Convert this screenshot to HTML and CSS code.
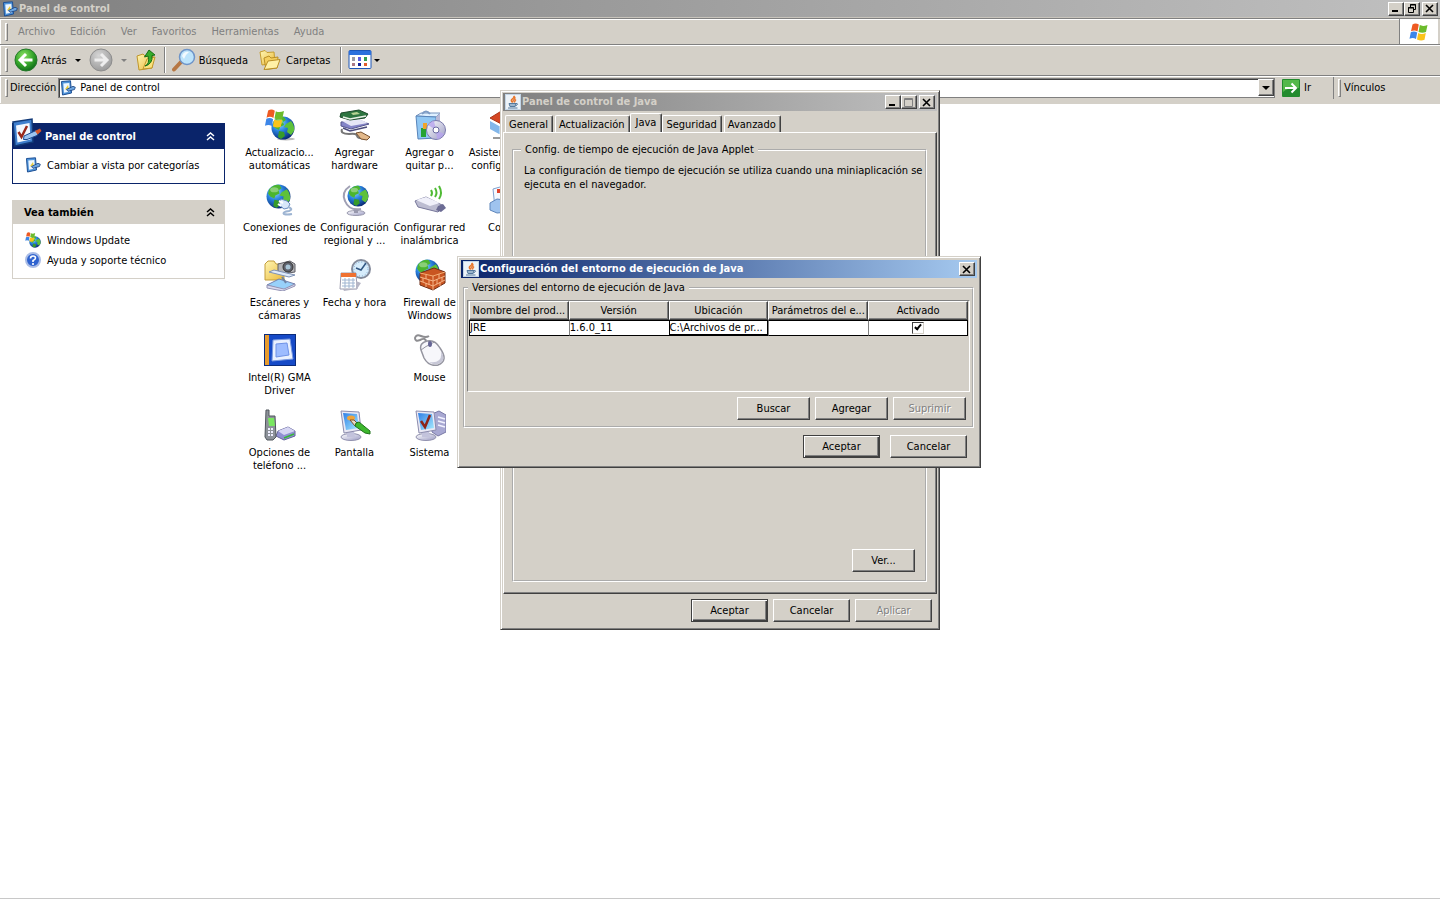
FILE: index.html
```html
<!DOCTYPE html>
<html lang="es">
<head>
    <meta charset="UTF-8">
    <meta name="viewport" content="width=device-width, initial-scale=1.0">
    <title>Panel de control</title>
    <link rel="stylesheet" href="styles.css">
</head>
<body>
    <!-- shared icons -->
    <svg class="sprite" aria-hidden="true">
        <defs>
            <radialGradient id="sea" cx="35%" cy="30%" r="75%">
                <stop offset="0" stop-color="#9be0ff"/>
                <stop offset=".45" stop-color="#2a83e0"/>
                <stop offset="1" stop-color="#08256f"/>
            </radialGradient>
            <radialGradient id="green" cx="40%" cy="30%" r="70%">
                <stop offset="0" stop-color="#8be063"/>
                <stop offset=".6" stop-color="#35a52a"/>
                <stop offset="1" stop-color="#12701a"/>
            </radialGradient>
            <radialGradient id="grey" cx="40%" cy="30%" r="70%">
                <stop offset="0" stop-color="#d6d6d6"/>
                <stop offset="1" stop-color="#9b9b9b"/>
            </radialGradient>
            <linearGradient id="yellow" x1="0" y1="0" x2="1" y2="1">
                <stop offset="0" stop-color="#fff6b4"/>
                <stop offset="1" stop-color="#eab93a"/>
            </linearGradient>
            <linearGradient id="screen" x1="0" y1="0" x2="1" y2="1">
                <stop offset="0" stop-color="#2f7fe6"/>
                <stop offset="1" stop-color="#a8ecff"/>
            </linearGradient>
            <linearGradient id="silver" x1="0" y1="0" x2="1" y2="1">
                <stop offset="0" stop-color="#ffffff"/>
                <stop offset="1" stop-color="#9c9cc4"/>
            </linearGradient>
        </defs>
        <symbol id="flag" viewBox="0 0 20 18">
            <path d="M3.500 1.500Q6.500 -.5 9.800 1.600L8.500 8.500Q5.500 6.500 2 8.300Z" fill="#ee5a22"/>
            <path d="M10.800 2.100Q14 3.800 18.500 1.900L17 9Q13.500 10.600 9.500 9Z" fill="#6cbb2c"/>
            <path d="M1.800 9.300Q5.200 7.700 8.200 9.600L7 16Q4 14.200 .5 15.800Z" fill="#3d86e8"/>
            <path d="M9.200 10Q12.500 11.800 16.800 10L15.500 16.800Q12 18.300 8 16.500Z" fill="#fbc31a"/>
        </symbol>
        <symbol id="globe" viewBox="0 0 24 24">
            <circle cx="12" cy="12" r="11.500" fill="url(#sea)"/>
            <path d="M3 5Q8 0 13 1L15 4L12 6L13 9L9 11L8 14L4 12L2 9Z" fill="#4cb52f"/>
            <path d="M15 8L20 5Q24 10 23 15L20 19L16 16L17 12L13 11Z" fill="#5ec13a"/>
            <path d="M8 15L13 16L14 20L10 23L7 21Z" fill="#379b2a"/>
            <ellipse cx="8" cy="5.500" rx="4" ry="2.500" fill="#fff" opacity=".35"/>
        </symbol>
        <symbol id="cpanel" viewBox="0 0 32 32">
            <path d="M3 5L22 2L23 25L5 29Z" fill="#3f7fce" stroke="#123a78" stroke-width="1.500"/>
            <path d="M6 8.500L19.500 6L20.500 22.500L7.500 25.500Z" fill="#f3f8ff"/>
            <path d="M8.500 15L11.500 20L17 9" fill="none" stroke="#99291b" stroke-width="2.500"/>
            <path d="M14 19L26 13.500L29 15.500L27 18.500L17 22.500L13.500 22.500Z" fill="#9cc4f0" stroke="#1d4a92"/>
            <path d="M25 14L30 11.500L31.500 14L27.500 17.500Z" fill="#d5562c"/>
        </symbol>
        <symbol id="cpanel-small" viewBox="0 0 16 16">
            <path d="M1.500 1.500L10.500 .8L11.500 13L2.500 15Z" fill="#4f95dc" stroke="#1d4f94"/>
            <path d="M3.300 3.500L9.300 3L10 11.600L4 12.800Z" fill="#eef7ff"/>
            <path d="M4.800 9.500L8 5L8.800 8.500Z" fill="#e8cb3c"/>
            <path d="M6.500 9.500L13 6.300L15.300 7.300L14.500 9.500L8 11.300Z" fill="#6ea6e0" stroke="#173f7d" stroke-width=".8"/>
        </symbol>
        <symbol id="java" viewBox="0 0 16 16">
            <rect width="16" height="16" fill="#c3d5e6"/>
            <rect x="1" y="1" width="14" height="14" fill="#edf3f8"/>
            <path d="M7.500 8.500Q5 6.500 7.500 4.800Q9.500 3.500 8.800 2Q11 4 9 5.500Q7.500 6.500 8 8.500M10 8.500Q9 7.500 11 5.500" fill="none" stroke="#e8762c" stroke-width="1.400"/>
            <path d="M4 9.500H11L10 12.500H5Z" fill="#9db6cd" stroke="#55799c"/>
            <path d="M3 14H12.500" stroke="#55799c"/>
            <path d="M11 9.500Q14.500 9.500 10.500 12" fill="none" stroke="#55799c"/>
        </symbol>
        <symbol id="chevrons" viewBox="0 0 9 9">
            <path d="M1 4L4.500 1L8 4M1 8L4.500 5L8 8" fill="none" stroke="currentColor" stroke-width="1.500"/>
        </symbol>
        <symbol id="monitor" viewBox="0 0 32 32">
            <ellipse cx="12" cy="28" rx="10" ry="3.500" fill="url(#silver)" stroke="#9191ae"/>
            <path d="M8 22L15 22L16 28L8 28Z" fill="#c3c3dc"/>
            <path d="M2 2L20 3L22 21L5 24Z" fill="#e9e9f5" stroke="#8c8cad"/>
            <path d="M4 4L18 5L20 19L7 21Z" fill="url(#screen)"/>
        </symbol>
    </svg>

    <div class="explorer">
        <header class="title-bar main-title">
            <svg class="icon16"><use href="#cpanel-small"/></svg>
            <h1>Panel de control</h1>
            <div class="controls">
                <button class="ctl" aria-label="Minimizar"><svg viewBox="0 0 10 9"><path d="M1 7H7" stroke="#000" stroke-width="2"/></svg></button>
                <button class="ctl" aria-label="Restaurar"><svg viewBox="0 0 10 9"><path d="M3.500 3V.5H8.500V5.500H6.500M3 1H9M1.500 3.500H6.500V8.500H1.500ZM1 4H7" fill="none" stroke="#000"/></svg></button>
                <button class="ctl last" aria-label="Cerrar"><svg viewBox="0 0 10 9"><path d="M1 1L8 8M8 1L1 8" stroke="#000" stroke-width="1.600"/></svg></button>
            </div>
        </header>

        <div class="menu-row">
            <nav class="menu">
                <i class="grip"></i>
                <a href="#">Archivo</a>
                <a href="#">Edición</a>
                <a href="#">Ver</a>
                <a href="#">Favoritos</a>
                <a href="#">Herramientas</a>
                <a href="#">Ayuda</a>
            </nav>
            <div class="brand"><svg><use href="#flag"/></svg></div>
        </div>

        <div class="toolbar">
            <i class="grip"></i>
            <button class="tool back">
                <svg class="round" viewBox="0 0 24 24"><circle cx="12" cy="12" r="11" fill="url(#green)" stroke="#24792a"/><path d="M18.500 12H7M12 6L6 12L12 18" fill="none" stroke="#fff" stroke-width="3"/></svg>
                Atrás
            </button>
            <button class="arrow" aria-label="Historial atrás"></button>
            <button class="tool" aria-label="Adelante" disabled>
                <svg class="round" viewBox="0 0 24 24"><circle cx="12" cy="12" r="11" fill="url(#grey)" stroke="#8d8d8d"/><path d="M5.500 12H17M12 6L18 12L12 18" fill="none" stroke="#eee" stroke-width="3"/></svg>
            </button>
            <button class="arrow off" aria-label="Historial adelante" disabled></button>
            <button class="tool" aria-label="Arriba">
                <svg class="tool-icon" viewBox="0 0 22 22"><path d="M2 7L8 5L10 7L18 7L17 19L4 21Z" fill="url(#yellow)" stroke="#bf962c"/><path d="M8 20L12 10L20 8L17 19Z" fill="#fbe27c" stroke="#bf962c"/><path d="M10 17Q15 15 13 7L9.500 8L14 1L20 6L17 6.500Q18 15 10 17Z" fill="#37ad2c" stroke="#176d16"/></svg>
            </button>
            <i class="sep"></i>
            <button class="tool search">
                <svg class="round" viewBox="0 0 24 24"><path d="M9 14L2 21.500" stroke="#b77743" stroke-width="4" stroke-linecap="round"/><circle cx="15" cy="9" r="7.500" fill="#bde4fb" stroke="#6e94c8" stroke-width="1.500"/><path d="M10 8Q12 3 17 4Q14 6 12 11Z" fill="#fff" opacity=".8"/></svg>
                Búsqueda
            </button>
            <button class="tool folders">
                <svg class="tool-icon" viewBox="0 0 22 22"><path d="M1 3L6 1.500L8 3.500L15 3L16 14L3 16Z" fill="url(#yellow)" stroke="#c59d30"/><path d="M5 9L10 7L12 9L19 8L18 19L7 20.500Z" fill="#f4cf5f" stroke="#b98e25"/><path d="M5 20.500L9 12L21 10.500L18 19Z" fill="#fff1a6" stroke="#b98e25"/></svg>
                Carpetas
            </button>
            <i class="sep"></i>
            <button class="tool views" aria-label="Vistas">
                <svg class="round" viewBox="0 0 24 24"><rect x="1" y="2.500" width="22" height="18" rx="1" fill="#fff" stroke="#1c56b8"/><path d="M1 5H23" stroke="#2b70dd" stroke-width="4"/><path d="M4 9H7V13H4Z" fill="#9a9aa4"/><path d="M10 9H13V13H10Z" fill="#5d5de0"/><path d="M16 9H19V13H16Z" fill="#349d50"/><path d="M4 15H7V18H4Z" fill="#a87986"/><path d="M10 15H13V18H10Z" fill="#12249a"/><path d="M16 15H19V18H16Z" fill="#e05d2c"/></svg>
            </button>
            <button class="arrow" aria-label="Elegir vista"></button>
        </div>

        <div class="address-row">
            <i class="grip"></i>
            <label for="address">Dirección</label>
            <div class="address">
                <svg class="icon16"><use href="#cpanel-small"/></svg>
                <input type="text" id="address" value="Panel de control">
                <button class="drop" aria-label="Mostrar direcciones"></button>
            </div>
            <button class="go">
                <svg viewBox="0 0 18 18"><rect width="18" height="18" rx="1" fill="#238b2e"/><path d="M1 1H17V9Q8 7 1 13Z" fill="#54b94b"/><path d="M3 9H14M9.500 4.500L14 9L9.500 13.500" fill="none" stroke="#fff" stroke-width="2"/></svg>
                Ir
            </button>
            <div class="links"><i class="grip"></i>Vínculos</div>
        </div>

        <main class="content">
            <aside class="side">
                <section class="box primary">
                    <h2><svg class="big-icon"><use href="#cpanel"/></svg>Panel de control<svg class="chev"><use href="#chevrons"/></svg></h2>
                    <ul>
                        <li><svg class="icon16"><use href="#cpanel-small"/></svg><a href="#">Cambiar a vista por categorías</a></li>
                    </ul>
                </section>
                <section class="box">
                    <h2>Vea también<svg class="chev"><use href="#chevrons"/></svg></h2>
                    <ul>
                        <li><svg class="icon16" viewBox="0 0 16 16"><use href="#globe" x="4" y="4" width="12" height="12"/><use href="#flag" x="0" y="0" width="11" height="10"/></svg><a href="#">Windows Update</a></li>
                        <li><svg class="icon16" viewBox="0 0 16 16"><circle cx="8" cy="8" r="7" fill="#2f63cf" stroke="#a9bce6" stroke-width="2"/><path d="M5.500 6.500Q5.500 4 8 4Q10.500 4 10.500 6Q10.500 7.500 8 8.500V10M8 11V13" fill="none" stroke="#fff" stroke-width="1.600"/></svg><a href="#">Ayuda y soporte técnico</a></li>
                    </ul>
                </section>
            </aside>

            <div class="icons">
                <a href="#" class="item">
                    <svg viewBox="0 0 32 32"><ellipse cx="22" cy="30" rx="9" ry="1.500" fill="#bbb"/><use href="#globe" x="7" y="7" width="24" height="24"/><use href="#flag" x="0" y="0" width="22" height="19"/></svg>
                    Actualizacio... automáticas
                </a>
                <a href="#" class="item">
                    <svg viewBox="0 0 32 32"><path d="M3 20Q1 25 10 25Q18 24 18 27Q19 30 25 29" fill="none" stroke="#777" stroke-width="2"/><path d="M2 13L20 11L30 15L12 20L2 17Z" fill="#8585c8" stroke="#55558c"/><path d="M3 12L20 10L29 14L12 17Z" fill="#e6e6f6"/><path d="M2 4L20 1L29 5L26 9L11 11L1 8Z" fill="#2d7540" stroke="#1c4a2a"/><path d="M4 8L11 10L27 7" fill="none" stroke="#e9f2e7" stroke-width="1.500"/><path d="M12 4L18 3L21 5L14 6Z" fill="#b5d392"/><path d="M4 19L11 22L28 18" fill="none" stroke="#4b4b7a" stroke-width="1.500"/><path d="M17 24L22 23L31 28L28 31L22 30Z" fill="#e3b98b" stroke="#77502d"/></svg>
                    Agregar hardware
                </a>
                <a href="#" class="item">
                    <svg viewBox="0 0 32 32"><path d="M2 7L7 4L26 4L22 8Z" fill="#dff0ff" stroke="#7693bd"/><path d="M2 7L22 8L22 29L4 30Z" fill="#91c7f3" stroke="#5884ba"/><path d="M22 8L26 4L26 26L22 29Z" fill="#b9b9d6"/><path d="M8 5Q12 0 16 5" fill="none" stroke="#7d9bc4" stroke-width="2"/><path d="M7 19H12V28H7Z" fill="#25a333"/><path d="M9 14H13V20H9Z" fill="#f0a428"/><circle cx="22" cy="21" r="9.500" fill="url(#silver)" stroke="#7a7aac"/><path d="M22 21L14 16Q17 12 20 12ZM22 21L30 25Q27 30 23 30Z" fill="#b6a4ee" opacity=".8"/><circle cx="22" cy="21" r="3" fill="#fff" stroke="#6969a0"/></svg>
                    Agregar o quitar p...
                </a>
                <a href="#" class="item">
                    <svg viewBox="0 0 32 32"><path d="M1 12L10 17L10 25L1 20Z" fill="#83b7ea"/><path d="M1 9L14 1L31 8L18 18Z" fill="#d54623" stroke="#a93518"/><path d="M10 17L20 18L20 27L10 25Z" fill="#b4d4f2"/><path d="M4 29H28" stroke="#999" stroke-width="2"/></svg>
                    Asistente para configurar r...
                </a>

                <a href="#" class="item">
                    <svg viewBox="0 0 32 32"><use href="#globe" x="2" y="0" width="25" height="25"/><path d="M17 15L23 17L26 20L24 24L20 25L15 21Z" fill="#d8e7fa" stroke="#6a8cc0"/><path d="M15 17L19 19M14 20L17 22" stroke="#fff" stroke-width="2"/><path d="M24 23Q30 25 25 27Q18 28 20 30Q23 31 28 30" fill="none" stroke="#9db4d2" stroke-width="2"/></svg>
                    Conexiones de red
                </a>
                <a href="#" class="item">
                    <svg viewBox="0 0 32 32"><ellipse cx="17" cy="29" rx="9" ry="2.500" fill="url(#silver)" stroke="#9898ad"/><path d="M17 25V29" stroke="#9898ad" stroke-width="4"/><path d="M11 2Q2 8 6 17Q10 27 22 25" fill="none" stroke="#a0a0b4" stroke-width="2"/><use href="#globe" x="8" y="1" width="22" height="22"/></svg>
                    Configuración regional y ...
                </a>
                <a href="#" class="item">
                    <svg viewBox="0 0 32 32"><path d="M1 17L12 13L30 22L24 28L4 23Z" fill="#bcbcd1" stroke="#77779a"/><path d="M2 16L12 13L26 19L16 22Z" fill="#f0f0fa"/><path d="M24 22L29 20L32 24L27 28L22 26Z" fill="#6c6c94"/><path d="M17 6Q19 9 17 12M21 4Q24 9 21 13M25 2Q29 9 25 15" fill="none" stroke="#4fba34" stroke-width="2"/></svg>
                    Configurar red inalámbrica
                </a>
                <a href="#" class="item">
                    <svg viewBox="0 0 32 32"><path d="M4 5L18 1L27 5L27 24L6 24Z" fill="#f5f9ff" stroke="#7fa1cf"/><path d="M1 19L8 15L30 18L30 27L8 29L1 26Z" fill="#9fc3ee" stroke="#5e86bb"/><rect x="8" y="5" width="4" height="4" fill="#e0432c"/><path d="M15 10H23M15 14H22" stroke="#9cb6d5"/></svg>
                    Correo
                </a>

                <a href="#" class="item">
                    <svg viewBox="0 0 32 32"><path d="M1 5L4 2L10 2L12 5L20 5L20 21L1 21Z" fill="url(#yellow)" stroke="#c39c3b"/><path d="M14 5L26 2L31 5L31 13L18 15L14 12Z" fill="#b4b4b8" stroke="#5f5f67"/><circle cx="24" cy="8" r="5" fill="#60636e" stroke="#333"/><circle cx="24" cy="8" r="2.500" fill="#a9c6d8"/><path d="M5 13L25 18L31 16L10 11Z" fill="#dfeaf9" stroke="#7f92b4"/><path d="M3 26L15 20L31 25L20 31Z" fill="#98d1fa" stroke="#7381af"/><path d="M3 26V29L19 32L31 27V25L20 30Z" fill="#d9d9ee" stroke="#9494b5"/><path d="M18 18L22 24" stroke="#6e84a5" stroke-width="2"/></svg>
                    Escáneres y cámaras
                </a>
                <a href="#" class="item">
                    <svg viewBox="0 0 32 32"><circle cx="22" cy="10" r="9" fill="#d6ecfb" stroke="#848b9b" stroke-width="2"/><circle cx="22" cy="10" r="7" fill="none" stroke="#7fa8cd" stroke-dasharray="1 2"/><path d="M27 4L22 11L17 9" fill="none" stroke="#315682" stroke-width="1.500"/><path d="M2 14L17 14L18 30L1 30Z" fill="#fff" stroke="#9c9caf"/><path d="M2 14L17 14V18H2Z" fill="#ef7131"/><path d="M3 21H16M3 24H16M3 27H16M6 19V29M10 19V29M14 19V29" stroke="#a0b5d1"/><path d="M17 22L22 24L18 30L5 32L4 30H17Z" fill="#b6b6c5"/></svg>
                    Fecha y hora
                </a>
                <a href="#" class="item">
                    <svg viewBox="0 0 32 32"><use href="#globe" x="1" y="0" width="25" height="25"/><path d="M6 14L20 9L31 13L31 24L19 31L6 26Z" fill="#c95521" stroke="#702e16"/><path d="M6 14L19 17L31 13" fill="none" stroke="#f4ad72"/><path d="M6 18L19 22L31 17M6 22L19 27L31 21M19 17V31M12 15.500V20M9 19V23M15 21V26M12 24V28M25 15V19M28 18V22M23 20V25M26 23V27" fill="none" stroke="#f5b487"/></svg>
                    Firewall de Windows
                </a>
                <span></span>

                <a href="#" class="item">
                    <svg viewBox="0 0 32 32"><rect x=".5" y=".5" width="31" height="31" fill="#164ac7" stroke="#0b2c7c"/><rect x="1" y="1" width="4" height="30" fill="#e79b2d"/><path d="M9 6L26 5L29 25L8 27Z" fill="#eaf1ff" stroke="#7898df"/><path d="M12 10L23 9L25 21L12 23Z" fill="#9dbcff" stroke="#6f92e6"/></svg>
                    Intel(R) GMA Driver
                </a>
                <span></span>
                <a href="#" class="item">
                    <svg viewBox="0 0 32 32"><path d="M12 8Q12 3 6 6Q1 8 1 4Q2 0 7 2Q12 4 15 2" fill="none" stroke="#8d8d91" stroke-width="2"/><path d="M7 16Q5 9 13 7Q21 5 26 14Q35 27 24 31Q15 33 10 24Z" fill="#f7f7fb" stroke="#94949f" stroke-width="1.500"/><path d="M7 16Q12 12 17 10Q21 7 22 9M14 7L17 11" fill="none" stroke="#94949f"/><ellipse cx="16" cy="10" rx="2" ry="3" fill="#666695"/><path d="M27 17Q33 27 24 30Q19 31 15 28Q29 30 27 17Z" fill="#c7c7d6"/></svg>
                    Mouse
                </a>
                <span></span>

                <a href="#" class="item">
                    <svg viewBox="0 0 32 32"><path d="M14 22L24 18L31 22L31 27L20 31L12 27Z" fill="#9191d2" stroke="#65659b"/><path d="M14 22L24 18L31 22L20 26Z" fill="#d6d6f3"/><path d="M20 29L30 25" stroke="#35b935" stroke-width="1.500"/><path d="M2 1L5 1L5 7L11 7L12 28L9 31L3 31L1 28Z" fill="#8d9299" stroke="#50565d"/><path d="M4 9H10L11 17L5 17Z" fill="#79e75f"/><path d="M4 20H10M4 23H10M4 26H10" stroke="#eef" stroke-dasharray="2 1" stroke-width="2"/></svg>
                    Opciones de teléfono ...
                </a>
                <a href="#" class="item">
                    <svg viewBox="0 0 32 32"><use href="#monitor" width="32" height="32"/><ellipse cx="12" cy="9" rx="4" ry="2.500" fill="#f0a43a"/><path d="M11 11L15 11L19 15L16 17Z" fill="#e9dcc8" stroke="#835227"/><path d="M17 14L20 13L31 22L31 25L26 24L16 17Z" fill="#3db72d" stroke="#20741c"/></svg>
                    Pantalla
                </a>
                <a href="#" class="item">
                    <svg viewBox="0 0 32 32"><path d="M18 5L25 2L32 6L32 23L24 27L18 23Z" fill="#a8a8d2" stroke="#7878a5"/><path d="M24 8L31 10M24 12L31 14M24 16L31 18" stroke="#f2f2ff" stroke-width="1.500"/><use href="#monitor" width="32" height="32"/><path d="M7 12L11 18L16 6" fill="none" stroke="#8e2418" stroke-width="2.500"/></svg>
                    Sistema
                </a>
            </div>
        </main>
    </div>

    <section class="window java-window">
        <header class="title-bar">
            <svg class="icon16"><use href="#java"/></svg>
            <h1>Panel de control de Java</h1>
            <div class="controls">
                <button class="ctl" aria-label="Minimizar"><svg viewBox="0 0 10 9"><path d="M1 7H7" stroke="#000" stroke-width="2"/></svg></button>
                <button class="ctl" aria-label="Maximizar" disabled><svg viewBox="0 0 10 9"><path d="M.5 .5H8.500V8.500H.5ZM0 1.500H9" fill="none" stroke="#808080"/></svg></button>
                <button class="ctl last" aria-label="Cerrar"><svg viewBox="0 0 10 9"><path d="M1 1L8 8M8 1L1 8" stroke="#000" stroke-width="1.600"/></svg></button>
            </div>
        </header>
        <div class="tabs">
            <button>General</button>
            <button>Actualización</button>
            <button class="active">Java</button>
            <button>Seguridad</button>
            <button>Avanzado</button>
        </div>
        <div class="tab-page">
            <fieldset>
                <legend>Config. de tiempo de ejecución de Java Applet</legend>
                <p>La configuración de tiempo de ejecución se utiliza cuando una miniaplicación se<br>ejecuta en el navegador.</p>
                <button class="btn view">Ver...</button>
            </fieldset>
        </div>
        <div class="actions">
            <button class="btn default">Aceptar</button>
            <button class="btn">Cancelar</button>
            <button class="btn" disabled>Aplicar</button>
        </div>
    </section>

    <section class="window runtime-window">
        <header class="title-bar active">
            <svg class="icon16"><use href="#java"/></svg>
            <h1>Configuración del entorno de ejecución de Java</h1>
            <div class="controls">
                <button class="ctl last" aria-label="Cerrar"><svg viewBox="0 0 10 9"><path d="M1 1L8 8M8 1L1 8" stroke="#000" stroke-width="1.600"/></svg></button>
            </div>
        </header>
        <fieldset>
            <legend>Versiones del entorno de ejecución de Java</legend>
            <div class="table-box">
                <table>
                    <thead>
                        <tr>
                            <th>Nombre del prod...</th>
                            <th>Versión</th>
                            <th>Ubicación</th>
                            <th>Parámetros del e...</th>
                            <th>Activado</th>
                        </tr>
                    </thead>
                    <tbody>
                        <tr>
                            <td>JRE</td>
                            <td>1.6.0_11</td>
                            <td class="focus">C:\Archivos de pr...</td>
                            <td></td>
                            <td class="check"><input type="checkbox" aria-label="Activado" checked></td>
                        </tr>
                    </tbody>
                </table>
            </div>
            <div class="row-actions">
                <button class="btn">Buscar</button>
                <button class="btn">Agregar</button>
                <button class="btn" disabled>Suprimir</button>
            </div>
        </fieldset>
        <div class="actions">
            <button class="btn default">Aceptar</button>
            <button class="btn">Cancelar</button>
        </div>
    </section>
</body>
</html>
```
FILE: styles.css
```css
* {
    margin: 0;
    padding: 0;
    box-sizing: border-box;
}
body, button, input {
    font-family: Tahoma, "DejaVu Sans Condensed", "DejaVu Sans", sans-serif;
    font-size: 11px;
    line-height: 13px;
    color: #000;
}
body {
    position: relative;
    background: #fff;
}
a {
    color: inherit;
    text-decoration: none;
}
button {
    background: none;
    border: none;
}
svg {
    display: block;
    flex: none;
}
.sprite {
    position: absolute;
    width: 0;
    height: 0;
}
.icon16 {
    width: 16px;
    height: 16px;
}

/* explorer window */
.explorer {
    display: flex;
    flex-direction: column;
    min-height: 100vh;
}
.title-bar {
    display: flex;
    align-items: center;
    gap: 1px;
    height: 18px;
    padding-left: 2px;
    background: linear-gradient(to right, #808080, #c0c0c0);
    color: #d4d0c8;
}
.title-bar.active {
    background: linear-gradient(to right, #0a246a, #a6caf0);
    color: #fff;
}
.title-bar h1 {
    flex: 1;
    font-size: 11px;
    line-height: 18px;
    white-space: nowrap;
}
.controls {
    display: flex;
    padding-right: 2px;
}
.ctl {
    width: 16px;
    height: 14px;
    padding: 1px 2px;
    background: #d4d0c8;
    border: 1px solid;
    border-color: #fff #404040 #404040 #fff;
    box-shadow: inset -1px -1px #808080;
}
.ctl svg {
    width: 10px;
    height: 9px;
}
.ctl.last {
    margin-left: 2px;
}
.main-title {
    border-bottom: 1px solid #c8c4bc;
}
.menu-row, .toolbar, .address-row {
    display: flex;
    align-items: center;
    background: #d4d0c8;
    border-top: 1px solid #808080;
    box-shadow: inset 0 1px #fff, inset 1px 0 #fff;
}
.menu-row {
    height: 26px;
    align-items: stretch;
}
.menu {
    flex: 1;
    display: flex;
    align-items: center;
    gap: 15px;
    padding-left: 5px;
    color: #808080;
    border-right: 1px solid #808080;
}
.menu .grip {
    margin-right: -5px;
}
.brand {
    width: 40px;
    display: flex;
    align-items: center;
    justify-content: center;
    background: #fff;
    border-right: 2px solid #d4d0c8;
}
.brand svg {
    width: 20px;
    height: 18px;
}
.grip {
    width: 3px;
    height: 18px;
    background: #d4d0c8;
    border: 1px solid;
    border-color: #fff #808080 #808080 #fff;
}
.toolbar {
    height: 31px;
    padding-left: 5px;
}
.toolbar .grip {
    margin-right: 6px;
    height: 24px;
}
.tool {
    display: flex;
    align-items: center;
    gap: 3px;
}
.round {
    width: 24px;
    height: 24px;
}
.tool-icon {
    width: 22px;
    height: 22px;
}
.tool.folders {
    gap: 5px;
    margin-left: 11px;
}
.arrow {
    width: 22px;
    height: 22px;
    display: flex;
    align-items: center;
    justify-content: center;
}
.arrow::after, .drop::after {
    content: "";
    border: 3px solid transparent;
    border-top-color: #000;
    border-bottom: none;
}
.arrow.off::after {
    border-top-color: #808080;
}
.sep {
    width: 2px;
    height: 26px;
    margin: 0 6px 0 7px;
    background: #808080;
    border-right: 1px solid #fff;
}
.sep + .views {
    margin-right: -6px;
}
.folders + .sep {
    margin-left: 10px;
}
.address-row {
    height: 29px;
    padding: 1px 0 5px 5px;
    border-bottom: 1px solid #d4d0c8;
    gap: 2px;
}
.address {
    flex: 1;
    display: flex;
    align-items: center;
    height: 20px;
    padding-left: 1px;
    background: #fff;
    border: 1px solid #808080;
    box-shadow: inset 1px 1px #404040;
}
.address input {
    flex: 1;
    height: 16px;
    padding-left: 4px;
    border: none;
    outline: none;
}
.drop {
    width: 16px;
    height: 17px;
    display: flex;
    align-items: center;
    justify-content: center;
    background: #d4d0c8;
    border: 1px solid;
    border-color: #fff #404040 #404040 #fff;
    box-shadow: inset -1px -1px #808080;
}
.drop::after {
    border-width: 4px;
    border-bottom: none;
}
.go {
    width: 57px;
    display: flex;
    align-items: center;
    gap: 4px;
    padding-left: 5px;
    border-right: 1px solid #808080;
    height: 22px;
}
.go svg {
    width: 18px;
    height: 18px;
}
.links {
    width: 104px;
    display: flex;
    align-items: center;
    gap: 3px;
    padding-left: 2px;
}
.content {
    flex: 1;
    display: flex;
    gap: 17px;
    padding: 5px 0 0 12px;
    margin-bottom: 1px;
    border-bottom: 1px solid #c8c8c8;
}

/* side panels */
.side {
    width: 213px;
    padding-top: 14px;
    display: flex;
    flex-direction: column;
    gap: 16px;
}
.box {
    border: 1px solid #d4d0c8;
}
.box h2 {
    display: flex;
    align-items: center;
    height: 23px;
    padding: 0 9px 0 11px;
    background: #d4d0c8;
    font-size: 11px;
}
.chev {
    width: 9px;
    height: 9px;
    margin-left: auto;
}
.box ul {
    list-style: none;
    padding: 6px 12px 8px;
}
.box li {
    display: flex;
    align-items: center;
    gap: 6px;
    height: 20px;
}
.box.primary {
    border-color: #0a246a;
}
.primary h2 {
    height: 25px;
    padding-left: 0;
    gap: 3px;
    background: #0a246a;
    color: #fff;
}
.big-icon {
    width: 32px;
    height: 32px;
    margin: -8px 0 0 -3px;
}

/* icon grid */
.icons {
    display: grid;
    grid-template-columns: repeat(4, 75px);
    grid-auto-rows: 75px;
}
.item {
    display: flex;
    flex-direction: column;
    align-items: center;
    gap: 5px;
    text-align: center;
}
.item svg {
    width: 32px;
    height: 32px;
}

/* floating windows */
.window {
    position: absolute;
    display: flex;
    flex-direction: column;
    background: #d4d0c8;
    border: 1px solid;
    border-color: #d4d0c8 #404040 #404040 #d4d0c8;
    box-shadow: inset 1px 1px #fff, inset -1px -1px #808080;
    padding: 2px;
}
.java-window {
    left: 500px;
    top: 90px;
    width: 440px;
    height: 540px;
}
.runtime-window {
    left: 457px;
    top: 256px;
    width: 524px;
    height: 212px;
    padding: 3px;
}
.tabs {
    display: flex;
    align-items: flex-end;
    gap: 2px;
    height: 21px;
    padding-left: 2px;
}
.tabs button {
    height: 17px;
    padding: 0 4px 0 3px;
    border: 1px solid;
    border-color: #fff #404040 transparent #fff;
    border-bottom: none;
    border-radius: 2px 2px 0 0;
    box-shadow: inset -1px 0 #808080;
}
.tabs .active {
    height: 20px;
    padding: 0 5px 3px;
    margin: 0 -2px -1px;
    background: #d4d0c8;
}
.tab-page {
    flex: 1;
    display: flex;
    padding: 10px 9px 11px 8px;
    border: 1px solid;
    border-color: #fff #404040 #404040 #fff;
    box-shadow: inset -1px -1px #808080;
}
fieldset {
    border: 2px groove #fff;
    min-width: 0;
}
legend {
    margin-left: 7px;
    padding: 0 4px;
}
.tab-page fieldset {
    flex: 1;
    display: flex;
    flex-direction: column;
    justify-content: space-between;
    padding: 8px 10px;
}
.tab-page legend {
    margin-left: -3px;
}
.tab-page p {
    line-height: 14px;
    white-space: nowrap;
}
.btn {
    width: 77px;
    height: 23px;
    border: 1px solid;
    border-color: #fff #404040 #404040 #fff;
    box-shadow: inset -1px -1px #808080;
}
.btn:disabled {
    color: #808080;
    text-shadow: 1px 1px #fff;
}
.btn.default {
    border-color: #404040;
    box-shadow: inset 1px 1px #fff, inset -1px -1px #404040, inset -2px -2px #808080;
}
.view {
    width: 63px;
    align-self: flex-end;
}
.actions {
    display: flex;
    justify-content: flex-end;
    gap: 5px;
    padding: 5px 5px 5px 0;
}

/* runtime dialog */
.runtime-window fieldset {
    margin: 3px 3px 0 2px;
    padding: 6px 2px;
}
.runtime-window legend {
    margin-left: 1px;
}
.table-box {
    height: 92px;
    border: 1px solid;
    border-color: #808080 #fff #fff #808080;
    padding: 0 1px;
}
table {
    width: 100%;
    table-layout: fixed;
    border-collapse: separate;
    border-spacing: 0;
}
th {
    height: 19px;
    font-weight: normal;
    white-space: nowrap;
    border: 1px solid;
    border-color: #fff #404040 #404040 #fff;
    box-shadow: inset -1px -1px #808080;
}
td {
    height: 16px;
    line-height: 12px;
    background: #fff;
    border: 1px solid #000;
    border-width: 1px 0 1px 1px;
    border-left-color: #808080;
    white-space: nowrap;
}
td:first-child {
    border-left-color: #000;
}
td:last-child {
    border-right: 1px solid #000;
}
td.focus {
    border: 1px solid #000;
    box-shadow: inset 0 -1px #000;
}
.check input {
    appearance: none;
    display: block;
    width: 12px;
    height: 12px;
    margin: 0 auto;
    border: 1px solid;
    border-color: #404040 #d4d0c8 #d4d0c8 #404040;
}
.check input:checked::after {
    content: "";
    display: block;
    box-sizing: content-box;
    width: 2px;
    height: 5px;
    margin-left: 3px;
    border: solid #000;
    border-width: 0 2px 2px 0;
    transform: rotate(40deg);
}
.row-actions {
    display: flex;
    justify-content: flex-end;
    gap: 5px;
    padding: 5px 4px 0 0;
}
.row-actions .btn {
    width: 73px;
}
.runtime-window .actions {
    gap: 10px;
    padding: 7px 10px 5px 0;
}
```
